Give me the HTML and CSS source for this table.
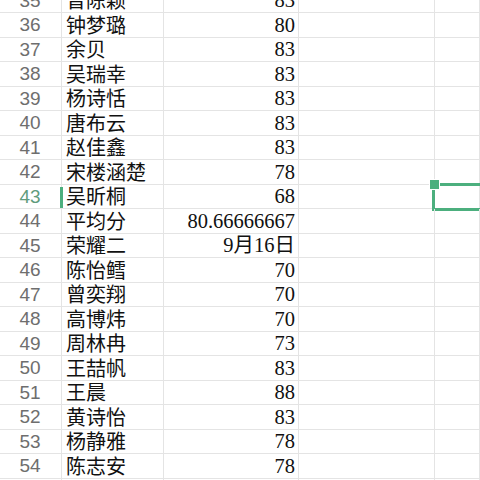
FILE: index.html
```html
<!DOCTYPE html>
<html lang="zh">
<head>
<meta charset="utf-8">
<link rel="stylesheet" href="styles.css">
</head>
<body>
<div class="sheet">
  <div class="row"><div class="hd">35</div><div class="nm">曾陈颖</div><div class="val">83</div><div class="c"></div><div class="d"></div></div>
  <div class="row"><div class="hd">36</div><div class="nm">钟梦璐</div><div class="val">80</div><div class="c"></div><div class="d"></div></div>
  <div class="row"><div class="hd">37</div><div class="nm">余贝</div><div class="val">83</div><div class="c"></div><div class="d"></div></div>
  <div class="row"><div class="hd">38</div><div class="nm">吴瑞幸</div><div class="val">83</div><div class="c"></div><div class="d"></div></div>
  <div class="row"><div class="hd">39</div><div class="nm">杨诗恬</div><div class="val">83</div><div class="c"></div><div class="d"></div></div>
  <div class="row"><div class="hd">40</div><div class="nm">唐布云</div><div class="val">83</div><div class="c"></div><div class="d"></div></div>
  <div class="row"><div class="hd">41</div><div class="nm">赵佳鑫</div><div class="val">83</div><div class="c"></div><div class="d"></div></div>
  <div class="row"><div class="hd">42</div><div class="nm">宋楼涵楚</div><div class="val">78</div><div class="c"></div><div class="d"></div></div>
  <div class="row"><div class="hd hd-active">43</div><div class="nm nm-cursor">吴昕桐</div><div class="val">68</div><div class="c"></div><div class="d d-selected"><span class="handle"></span></div></div>
  <div class="row"><div class="hd">44</div><div class="nm">平均分</div><div class="val">80.66666667</div><div class="c"></div><div class="d"></div></div>
  <div class="row"><div class="hd">45</div><div class="nm">荣耀二</div><div class="val">9月16日</div><div class="c"></div><div class="d"></div></div>
  <div class="row"><div class="hd">46</div><div class="nm">陈怡鳕</div><div class="val">70</div><div class="c"></div><div class="d"></div></div>
  <div class="row"><div class="hd">47</div><div class="nm">曾奕翔</div><div class="val">70</div><div class="c"></div><div class="d"></div></div>
  <div class="row"><div class="hd">48</div><div class="nm">高博炜</div><div class="val">70</div><div class="c"></div><div class="d"></div></div>
  <div class="row"><div class="hd">49</div><div class="nm">周林冉</div><div class="val">73</div><div class="c"></div><div class="d"></div></div>
  <div class="row"><div class="hd">50</div><div class="nm">王喆帆</div><div class="val">83</div><div class="c"></div><div class="d"></div></div>
  <div class="row"><div class="hd">51</div><div class="nm">王晨</div><div class="val">88</div><div class="c"></div><div class="d"></div></div>
  <div class="row"><div class="hd">52</div><div class="nm">黄诗怡</div><div class="val">83</div><div class="c"></div><div class="d"></div></div>
  <div class="row"><div class="hd">53</div><div class="nm">杨静雅</div><div class="val">78</div><div class="c"></div><div class="d"></div></div>
  <div class="row"><div class="hd">54</div><div class="nm">陈志安</div><div class="val">78</div><div class="c"></div><div class="d"></div></div>
  <div class="row"><div class="hd">55</div><div class="nm"></div><div class="val"></div><div class="c"></div><div class="d"></div></div>
</div>
</body>
</html>
```
FILE: styles.css
```css
html, body {
  margin: 0;
  padding: 0;
  background: #ffffff;
  width: 480px;
  height: 480px;
  overflow: hidden;
}

.sheet {
  margin-top: -11.5px;
  display: flex;
  flex-direction: column;
}

.row {
  display: grid;
  grid-template-columns: 62px 102px 135px 136px 1fr;
  height: 24.5px;
  box-sizing: border-box;
  border-bottom: 1px solid #e4e4e4;
}

.row > div {
  box-sizing: border-box;
  border-right: 1px solid #e4e4e4;
  display: flex;
  align-items: center;
  white-space: nowrap;
  overflow: visible;
  position: relative;
  line-height: 1;
}

.hd {
  justify-content: center;
  font-family: "Liberation Sans", Arial, sans-serif;
  font-size: 19px;
  color: #6e6e6e;
  padding-right: 1px;
}

.hd-active {
  color: #5f9c7c;
}

.nm {
  padding-left: 4px;
  font-family: "Noto Sans CJK SC", sans-serif;
  font-size: 20px;
  color: #111111;
}

.nm-cursor::before {
  content: "";
  position: absolute;
  left: -2px;
  top: 2px;
  width: 3px;
  height: 21px;
  background: #4caf7e;
}

.val {
  justify-content: flex-end;
  padding-right: 3px;
  font-family: "Liberation Serif", "Times New Roman", "Noto Sans CJK SC", serif;
  font-size: 20.5px;
  color: #111111;
}

.d-selected::after {
  content: "";
  position: absolute;
  left: -3px;
  top: -2px;
  right: -2px;
  bottom: -3px;
  border: 3px solid #4caf7e;
  border-right: none;
}

.handle {
  position: absolute;
  left: -6px;
  top: -6px;
  width: 9px;
  height: 9px;
  background: #4caf7e;
  border: 1px solid #ffffff;
  z-index: 2;
}
```
